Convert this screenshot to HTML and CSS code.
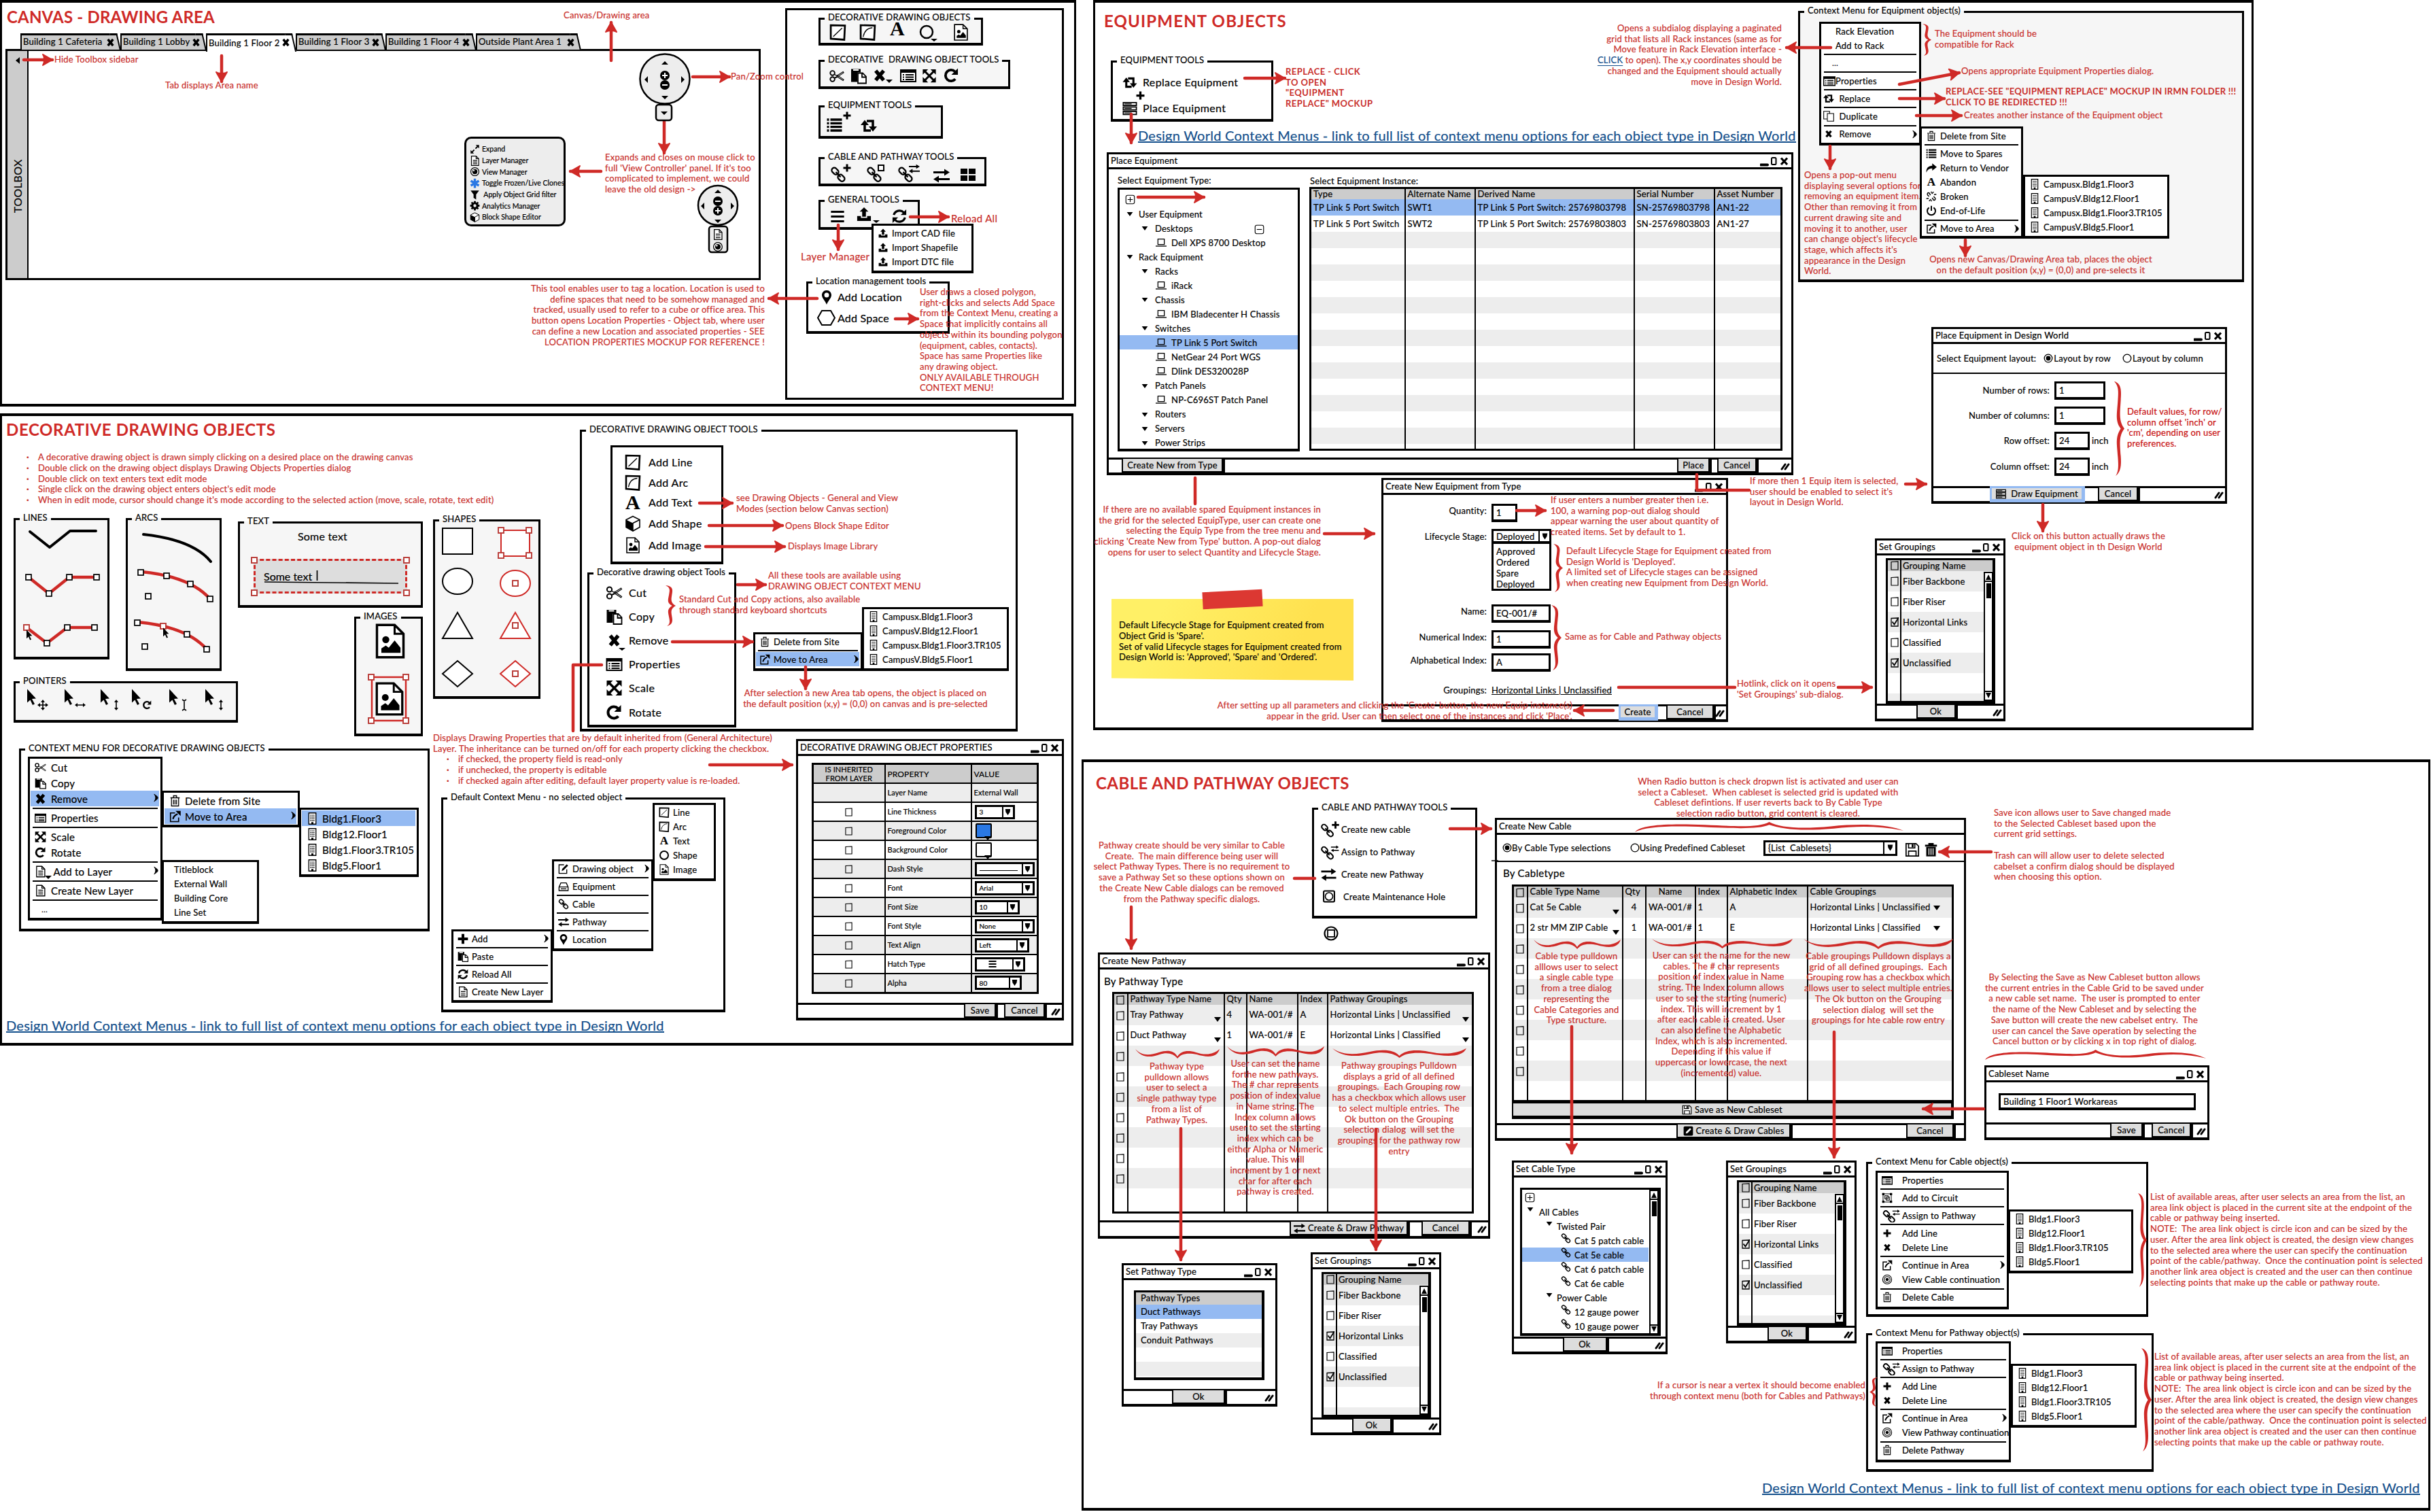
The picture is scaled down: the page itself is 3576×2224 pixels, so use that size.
FILE: index.html
```html
<!DOCTYPE html>
<html lang="en">
<head>
<meta charset="utf-8">
<title>Design World mockup board</title>
<link rel="stylesheet" href="styles.css">
</head>
<body>
<svg class="defs" aria-hidden="true">
<symbol id="x" viewBox="0 0 24 24"><path d="M5 3.500L19 20.500M19 3.500L5 20.500" stroke="#000" stroke-width="6.500"/></symbol>
<symbol id="ctl" viewBox="0 0 42 16"><path d="M1 13.500h10" stroke="#000" stroke-width="4" stroke-linecap="round"/><rect x="17" y="3" width="6.500" height="10" rx="1.500" fill="none" stroke="#000" stroke-width="2"/><path d="M31 3.500l9 9.500M40 3.500l-9 9.500" stroke="#000" stroke-width="3.200"/></symbol>
<symbol id="scissors" viewBox="0 0 24 24"><g fill="none" stroke="#000"><circle cx="5" cy="7" r="3.600" stroke-width="2"/><circle cx="5" cy="17" r="3.600" stroke-width="2"/><path d="M8 9l4 2.500L22 5l1 1.500L12 14 8 15.500M8 15l4-2.500L22 19l1-1.500L12 10" stroke-width="1.200"/></g></symbol>
<symbol id="copy" viewBox="0 0 24 24"><path d="M1 2h14v5h-4l-1 1v13H1z"/><path d="M4 2.500h8v2H4z" fill="#fff"/><path d="M11 8h7l5 5v10H11z" fill="#fff" stroke="#000" stroke-width="1.800"/><path d="M17 8v6h6" fill="none" stroke="#000" stroke-width="1.800"/></symbol>
<symbol id="props" viewBox="0 0 24 24"><path d="M1 4h22v17H1z" fill="#fff" stroke="#000" stroke-width="2"/><path d="M1 4h22v4H1z"/><path d="M4 11h2m2 0h12M4 14.500h2m2 0h12M4 18h2m2 0h12" stroke="#000" stroke-width="1.800"/></symbol>
<symbol id="scale" viewBox="0 0 24 24"><path d="M4 4l16 16M20 4L4 20" stroke="#000" stroke-width="3.500"/><path d="M1 1h9L1 10zM23 1h-9l9 9zM1 23h9l-9-9zM23 23h-9l9-9z"/></symbol>
<symbol id="rotate" viewBox="0 0 24 24"><path d="M18 17.500A8.500 8.500 0 1 1 17.500 6" fill="none" stroke="#000" stroke-width="4"/><path d="M22 1v10H12z"/></symbol>
<symbol id="list" viewBox="0 0 24 24"><path d="M1 4h3m2 0h17M1 9.300h3m2 0h17M1 14.600h3m2 0h17M1 20h3m2 0h17" stroke="#000" stroke-width="3.300"/></symbol>
<symbol id="plus" viewBox="0 0 24 24"><path d="M12 1v22M1 12h22" stroke="#000" stroke-width="6"/></symbol>
<symbol id="replace" viewBox="0 0 24 24"><path d="M6 9v10h9M18 15V5H9" fill="none" stroke="#000" stroke-width="3.500"/><path d="M0 11l6-7.500 6 7.500zM12 13l6 7.500 6-7.500z"/></symbol>
<symbol id="link" viewBox="0 0 24 24"><g fill="none" stroke="#000" stroke-width="2.300"><rect x="2" y="3" width="11" height="7.500" rx="3.700" transform="rotate(45 7.500 6.700)"/><rect x="11" y="13" width="11" height="7.500" rx="3.700" transform="rotate(45 16.500 16.700)"/><path d="M8.500 8l7 7.500"/></g></symbol>
<symbol id="swap" viewBox="0 0 24 24"><path d="M0 7.500h18M6 17.500h18" stroke="#000" stroke-width="3"/><path d="M16 2.500l8 5-8 5zM8 12.500l-8 5 8 5z"/></symbol>
<symbol id="assign" viewBox="0 0 34 24"><use href="#link" width="24" height="24" y="2"/><use href="#swap" x="16" width="17" height="13"/></symbol>
<symbol id="addlink" viewBox="0 0 34 28"><use href="#link" width="24" height="24" y="4"/><use href="#plus" x="19" width="13" height="13"/></symbol>
<symbol id="grid" viewBox="0 0 24 24"><path d="M1 3h10v8H1zM13 3h10v8H13zM1 13h10v8H1zM13 13h10v8H13z"/></symbol>
<symbol id="menu" viewBox="0 0 24 24"><path d="M1 4h22M1 12h22M1 20h22" stroke="#000" stroke-width="3.600"/></symbol>
<symbol id="upload" viewBox="0 0 24 24"><path d="M12 1l7 7h-4v8H9V8H5zM1 15h6v3h10v-3h6v8H1z"/></symbol>
<symbol id="refresh" viewBox="0 0 24 24"><path d="M3 10a9.500 9.500 0 0 1 16-4M21 14a9.500 9.500 0 0 1-16 4" fill="none" stroke="#000" stroke-width="3.500"/><path d="M23 1v9h-9zM1 23v-9h9z"/></symbol>
<symbol id="pin" viewBox="0 0 24 24"><path fill-rule="evenodd" d="M12 0c5 0 8 4 8 8 0 5-5 9-8 16C9 17 4 13 4 8c0-4 3-8 8-8zm0 4a4 4 0 1 0 0 8 4 4 0 0 0 0-8z"/></symbol>
<symbol id="line" viewBox="0 0 24 24"><path d="M2 2l20 .5-1 20L2 21z" fill="#fff" stroke="#000" stroke-width="2.600"/><path d="M5.500 18L18 6" stroke="#000" stroke-width="1.300"/></symbol>
<symbol id="arc" viewBox="0 0 24 24"><path d="M2 2l20 .5-1 20L2 21z" fill="#fff" stroke="#000" stroke-width="2.600"/><path d="M5.500 18.500C7 10 12 6 18.500 5.500" fill="none" stroke="#000" stroke-width="1.300"/></symbol>
<symbol id="ring" viewBox="0 0 24 24"><circle cx="12" cy="12" r="9" fill="none" stroke="#000" stroke-width="3"/></symbol>
<symbol id="image" viewBox="0 0 24 24"><path d="M3 1h12l6 6v16H3z" fill="#fff" stroke="#000" stroke-width="1.600"/><path d="M15 1v6h6" fill="none" stroke="#000" stroke-width="1.400"/><circle cx="9" cy="11" r="2.400"/><path d="M6 20v-3l3-2 2 1.500 4-5 4 5V20z"/></symbol>
<symbol id="cube" viewBox="0 0 24 24"><path d="M12 1.500l10 5v11l-10 5.500-10-5.500v-11z" fill="#fff" stroke="#000" stroke-width="1.600"/><path d="M2 6.500l10 5V23L2 17.500z"/><path d="M12 11.500l10-5M12 11.500V23" stroke="#000" stroke-width="1.500"/></symbol>
<symbol id="doc" viewBox="0 0 24 24"><path d="M4 1h11l6 6v16H4z" fill="#fff" stroke="#000" stroke-width="1.900"/><path d="M15 1v6h6M7.500 11h10M7.500 15h10M7.500 19h10" fill="none" stroke="#000" stroke-width="1.800"/></symbol>
<symbol id="eye" viewBox="0 0 24 24"><circle cx="12" cy="12" r="9.500" fill="#fff" stroke="#000" stroke-width="2"/><circle cx="12" cy="12" r="6"/><circle cx="9.500" cy="9.500" r="1.800" fill="#fff"/></symbol>
<symbol id="snow" viewBox="0 0 24 24"><path d="M12 1v22M2.500 6.500l19 11M21.500 6.500l-19 11" stroke="#2a78e4" stroke-width="5.500"/></symbol>
<symbol id="funnel" viewBox="0 0 24 24"><path d="M2 2h20l-7 9v12l-6-4v-8z"/></symbol>
<symbol id="gear" viewBox="0 0 24 24"><path d="M12 1v22M1 12h22M4.200 4.200l15.600 15.600M19.800 4.200L4.200 19.800" stroke="#000" stroke-width="4.500"/><circle cx="12" cy="12" r="6" fill="#ededed" stroke="#000" stroke-width="5"/></symbol>
<symbol id="expand" viewBox="0 0 24 24"><path d="M5 19L19 5" stroke="#000" stroke-width="3" stroke-dasharray="8 4"/><path d="M22 2v8l-8-8zM2 22v-8l8 8z"/></symbol>
<symbol id="trash" viewBox="0 0 24 24"><path d="M3 6h18M9 5V2h6v3M5 7v15h14V7M9 9.500V19M12 9.500V19M15 9.500V19" fill="none" stroke="#000" stroke-width="1.700"/></symbol>
<symbol id="trashb" viewBox="0 0 24 24"><path d="M2 5h20M9 4V2h6v2" fill="none" stroke="#000" stroke-width="3"/><path d="M4 7h16v16H4z"/><path d="M8.500 9.500v11M12 9.500v11M15.500 9.500v11" stroke="#fff" stroke-width="1.500"/></symbol>
<symbol id="move" viewBox="0 0 24 24"><path d="M12 5H3v17h16v-8" fill="none" stroke="#000" stroke-width="2.200"/><path d="M8 17c1-5 4-8 9-10" fill="none" stroke="#000" stroke-width="3"/><path d="M13 1h10v10z"/></symbol>
<symbol id="bldg" viewBox="0 0 24 24"><path d="M5 1h14v22H5z" fill="#fff" stroke="#000" stroke-width="1.800"/><path d="M8 5.500h8M8 9h8M8 12.500h8M8 16h8" stroke="#000" stroke-width="1.700" stroke-dasharray="2 1"/><path d="M10 19h4v4h-4z"/></symbol>
<symbol id="rack" viewBox="0 0 24 24"><path d="M1 2h22v5H1zM1 9.500h22v5H1zM1 17h22v5H1z" fill="#fff" stroke="#000" stroke-width="2"/><path d="M3 4.500h12M3 12h12M3 19.500h12" stroke="#000" stroke-width="1.500"/></symbol>
<symbol id="laptop" viewBox="0 0 24 24"><path d="M5 4h14v12H5z" fill="none" stroke="#000" stroke-width="1.900"/><path d="M0 19.500h24" stroke="#000" stroke-width="2"/></symbol>
<symbol id="plusbox" viewBox="0 0 24 24"><rect x="2" y="2" width="20" height="20" rx="4" fill="none" stroke="#000" stroke-width="1.800"/><path d="M12 6v12M6 12h12" stroke="#000" stroke-width="1.800"/></symbol>
<symbol id="minusbox" viewBox="0 0 24 24"><rect x="2" y="2" width="20" height="20" rx="4" fill="none" stroke="#000" stroke-width="1.800"/><path d="M6 12h12" stroke="#000" stroke-width="1.800"/></symbol>
<symbol id="dup" viewBox="0 0 24 24"><path d="M1 1h13v17H1z" fill="#fff" stroke="#000" stroke-width="1.600"/><path d="M9 6h14v17H9z" fill="#fff" stroke="#000" stroke-width="1.600"/></symbol>
<symbol id="share" viewBox="0 0 24 24"><path d="M14 2l10 8-10 8v-5C8 13 4 15 1 22 0 12 6 7 14 7z"/></symbol>
<symbol id="broken" viewBox="0 0 24 24"><path d="M10 9L7 4C4 3 2 6 4 9l3 3M14 15l3 5c3 1 5-2 3-5l-3-3M13 6l4-4M18 8l5-1M11 18l-4 4M6 16l-5 1M12 1v3M12 20v3" fill="none" stroke="#000" stroke-width="2.200"/></symbol>
<symbol id="power" viewBox="0 0 24 24"><path d="M7 5a9 9 0 1 0 10 0" fill="none" stroke="#000" stroke-width="3"/><path d="M12 1v11" stroke="#000" stroke-width="3"/></symbol>
<symbol id="save" viewBox="0 0 24 24"><path d="M2 2h16l4 4v16H2z" fill="#fff" stroke="#000" stroke-width="1.900"/><path d="M6 2v7h10V2M6 22v-8h12v8" fill="none" stroke="#000" stroke-width="1.800"/><path d="M11 3h3v5h-3z"/></symbol>
<symbol id="pencil" viewBox="0 0 24 24"><rect x="1" y="1" width="22" height="22" rx="3"/><path d="M6 18l1-4 9-9 3 3-9 9z" fill="#fff"/></symbol>
<symbol id="hole" viewBox="0 0 24 24"><rect x="2" y="2" width="20" height="20" rx="2" fill="#fff" stroke="#000" stroke-width="2.600"/><circle cx="12" cy="12" r="7" fill="none" stroke="#000" stroke-width="2"/></symbol>
<symbol id="circuit" viewBox="0 0 24 24"><path d="M3 3h18v18H3z" fill="none" stroke="#000" stroke-width="1.500"/><path d="M1 1h5v5H1zM18 1h5v5h-5zM1 18h5v5H1zM18 18h5v5h-5z"/><rect x="7" y="7" width="7" height="7" fill="none" stroke="#000" stroke-width="1.500"/><rect x="10" y="10" width="7" height="7" fill="none" stroke="#000" stroke-width="1.500"/></symbol>
<symbol id="target" viewBox="0 0 24 24"><circle cx="12" cy="12" r="10" fill="none" stroke="#000" stroke-width="1.600"/><circle cx="12" cy="12" r="6.500" fill="none" stroke="#000" stroke-width="1.600"/><circle cx="12" cy="12" r="3.500"/></symbol>
<symbol id="drive" viewBox="0 0 24 24"><path d="M2 13l4-9h12l4 9v8H2zM2 13h20M6 17h12" fill="none" stroke="#000" stroke-width="2"/></symbol>
<symbol id="edit" viewBox="0 0 24 24"><path d="M13 3H2v19h17v-9" fill="none" stroke="#000" stroke-width="2"/><path d="M8 17l1-5L19 2l3 3-10 10z"/></symbol>
<symbol id="chev" viewBox="0 0 10 14"><path d="M2 1c4 3 6 4 6 6s-2 3-6 6c3-4 3-8 0-12z" stroke="#000" stroke-width="1"/></symbol>
<symbol id="down" viewBox="0 0 10 8"><path d="M0 1h10L5 8z"/></symbol>
<symbol id="pull" viewBox="0 0 12 14"><path d="M1 1h10l-1 6-4 6-4-6z"/></symbol>
<symbol id="box" viewBox="0 0 12 14"><path d="M1 1.500l10-.5v12H1z" fill="none" stroke="#000" stroke-width="1.200"/></symbol>
<symbol id="boxv" viewBox="0 0 12 14"><path d="M1 1.500l10-.5v12H1z" fill="none" stroke="#000" stroke-width="1.300"/><path d="M2.500 6.500l3 4L12 0" fill="none" stroke="#000" stroke-width="1.800"/></symbol>
<symbol id="grip" viewBox="0 0 14 12"><path d="M2 10l5-7M7 10l5-7" stroke="#000" stroke-width="3" stroke-linecap="round"/></symbol>
<symbol id="ron" viewBox="0 0 14 14"><circle cx="7" cy="7" r="5.800" fill="#fff" stroke="#000" stroke-width="1.300"/><circle cx="7" cy="7" r="3.400"/></symbol>
<symbol id="roff" viewBox="0 0 14 14"><circle cx="7" cy="7" r="5.800" fill="#fff" stroke="#000" stroke-width="1.300"/></symbol>
<symbol id="cursor" viewBox="0 0 14 24"><path d="M0 0l13 14-6 .5L11 22l-3 1.500L4.500 16 0 20z"/></symbol>
<symbol id="h" viewBox="0 0 10 10"><rect x="1" y="1" width="8" height="8" fill="#fff" stroke="#000" stroke-width="1.700"/></symbol>
<symbol id="hr" viewBox="0 0 10 10"><rect x="1" y="1" width="8" height="8" fill="#fff" stroke="#b83a36" stroke-width="1.900"/></symbol>
<symbol id="br" viewBox="0 0 14 100" preserveAspectRatio="none"><path d="M0 0C10 2 10 10 9 20 8 33 6 42 14 50 6 58 8 66 9 79 10 89 9 96 2 100 6 95 6 90 5 80 4 67 1 59 9 50 1 42 4 34 5 20 6 10 6 5 0 0z" fill="#cf2a27"/></symbol>
<symbol id="bd" viewBox="0 0 100 14" preserveAspectRatio="none"><path d="M0 0C8 11 18 9 28 5 38 1 46 2 50 11 54 3 62 1 72 5 82 9 92 9 100 0 97 14 84 12 73 8 62 5 54 7 50 14 46 7 38 4 29 8 18 13 7 13 0 0z" fill="#cf2a27"/></symbol>
<symbol id="bu" viewBox="0 0 100 14" preserveAspectRatio="none"><path d="M0 14C2 3 14 2 26 4 38 6 46 8 50 0 54 8 62 10 73 6 84 2 94 3 100 12 92 6 84 5 74 9 62 13 55 10 50 4 46 10 38 9 26 7 14 5 4 6 0 14z" fill="#cf2a27"/></symbol>
<symbol id="bl" viewBox="0 0 14 100" preserveAspectRatio="none"><path d="M14 0C4 2 4 10 5 20 6 33 8 42 0 50 8 58 6 66 5 79 4 89 5 96 12 100 8 95 8 90 9 80 10 67 13 59 5 50 13 42 10 34 9 20 8 10 8 5 14 0z" fill="#cf2a27"/></symbol>
<marker id="head" viewBox="-17 -10 19 20" refX="0" refY="0" markerWidth="19" markerHeight="20" markerUnits="userSpaceOnUse" orient="auto"><path d="M0 0L-14-8Q-11-3-13 0-11 3-14 8z" fill="#cf2a27" stroke="#cf2a27" stroke-width="2" stroke-linejoin="round"/></marker>
</svg>

<main class="board">
<div class="col left">

<section class="panel canvas-area">
<h1 class="t1">CANVAS - DRAWING AREA</h1>
<div class="viewport"><aside><svg class="hide" viewBox="0 0 6 10"><path d="M6 0v10L0 5z"/></svg><span>TOOLBOX</span></aside></div>
<nav class="tabs">
<div class="tab a">Building 1 Cafeteria<svg><use href="#x"/></svg></div>
<div class="tab b">Building 1 Lobby<svg><use href="#x"/></svg></div>
<div class="tab c on">Building 1 Floor 2<svg><use href="#x"/></svg></div>
<div class="tab c">Building 1 Floor 3<svg><use href="#x"/></svg></div>
<div class="tab d">Building 1 Floor 4<svg><use href="#x"/></svg></div>
<div class="tab e">Outside Plant Area 1<svg><use href="#x"/></svg></div>
</nav>
<ul class="viewctl">
<li><svg><use href="#expand"/></svg>Expand<li><svg><use href="#doc"/></svg>Layer Manager<li><svg><use href="#eye"/></svg>View Manager<li><svg><use href="#snow"/></svg>Toggle Frozen/Live Clones<li><svg><use href="#funnel"/></svg>&nbsp;Apply Object Grid filter<li><svg><use href="#gear"/></svg>Analytics Manager<li><svg><use href="#cube"/></svg>Block Shape Editor
</ul>
<div class="toolbox"></div>
<fieldset class="f-ddo g"><legend>DECORATIVE DRAWING OBJECTS</legend></fieldset>
<fieldset class="f-ddot g"><legend>DECORATIVE&nbsp; DRAWING OBJECT TOOLS</legend></fieldset>
<fieldset class="f-eq g"><legend>EQUIPMENT TOOLS</legend></fieldset>
<fieldset class="f-cp g"><legend>CABLE AND PATHWAY TOOLS</legend></fieldset>
<fieldset class="f-gen g"><legend>GENERAL TOOLS</legend></fieldset>
<ul class="menu m-import"><li><svg><use href="#upload"/></svg>Import CAD file<li><svg><use href="#upload"/></svg>Import Shapefile<li><svg><use href="#upload"/></svg>Import DTC file</ul>
<fieldset class="f-loc"><legend>Location management tools</legend><div>Add Location</div><div>Add Space</div></fieldset>
</section>

<section class="panel decorative">
<h1 class="t2">DECORATIVE DRAWING OBJECTS</h1>
<ul class="rules"><li>A decorative drawing object is drawn simply clicking on a desired place on the drawing canvas<li>Double click on the drawing object displays Drawing Objects Properties dialog<li>Double click on text enters text edit mode<li>Single click on the drawing object enters object's edit mode<li>When in edit mode, cursor should change it's mode according to the selected action (move, scale, rotate, text edit)</ul>
<fieldset class="f-lines g"><legend>LINES</legend></fieldset>
<fieldset class="f-arcs g"><legend>ARCS</legend></fieldset>
<fieldset class="f-text g"><legend>TEXT</legend><p>Some text</p><div class="sel"><span>Some text</span></div></fieldset>
<fieldset class="f-shapes g"><legend>SHAPES</legend></fieldset>
<fieldset class="f-images g"><legend>IMAGES</legend></fieldset>
<fieldset class="f-pointers g"><legend>POINTERS</legend></fieldset>
<fieldset class="f-tools"><legend>DECORATIVE DRAWING OBJECT TOOLS</legend></fieldset>
<ul class="list l-add"><li><svg><use href="#line"/></svg>Add Line<li><svg><use href="#arc"/></svg>Add Arc<li><b class="A">A</b>Add Text<li><svg><use href="#cube"/></svg>Add Shape<li><svg><use href="#image"/></svg>Add Image</ul>
<fieldset class="f-dtools"><legend>Decorative drawing object Tools</legend>
<ul><li><svg><use href="#scissors"/></svg>Cut<li><svg><use href="#copy"/></svg>Copy<li><svg><use href="#x"/></svg>Remove<li><svg><use href="#props"/></svg>Properties<li><svg><use href="#scale"/></svg>Scale<li><svg><use href="#rotate"/></svg>Rotate</ul></fieldset>
<ul class="menu m-rm"><li><svg><use href="#trash"/></svg>Delete from Site<li class="sep"><li class="on"><svg><use href="#move"/></svg>Move to Area<svg class="ch"><use href="#chev"/></svg></ul>
<ul class="menu m-campus1"><li><svg><use href="#bldg"/></svg>Campusx.Bldg1.Floor3<li><svg><use href="#bldg"/></svg>CampusV.Bldg12.Floor1<li><svg><use href="#bldg"/></svg>Campusx.Bldg1.Floor3.TR105<li><svg><use href="#bldg"/></svg>CampusV.Bldg5.Floor1</ul>

<fieldset class="f-ctx"><legend>CONTEXT MENU FOR DECORATIVE DRAWING OBJECTS</legend></fieldset>
<ul class="menu big m-ctx"><li><svg><use href="#scissors"/></svg>Cut<li><svg><use href="#copy"/></svg>Copy<li class="on"><svg><use href="#x"/></svg>Remove<svg class="ch"><use href="#chev"/></svg><li class="sep"><li><svg><use href="#props"/></svg>Properties<li class="sep"><li><svg><use href="#scale"/></svg>Scale<li><svg><use href="#rotate"/></svg>Rotate<li class="sep"><li><svg><use href="#doc"/></svg>&nbsp;Add to Layer<svg class="ch"><use href="#chev"/></svg><li class="sep"><li><svg><use href="#doc"/></svg>Create New Layer<li class="sep"><li class="dots">...</ul>
<ul class="menu m-layers plain"><li>Titleblock<li>External Wall<li>Building Core<li>Line Set</ul>
<ul class="menu big m-ctx2"><li><svg><use href="#trash"/></svg>Delete from Site<li class="on"><svg><use href="#move"/></svg>Move to Area<svg class="ch"><use href="#chev"/></svg></ul>
<ul class="menu big m-ctx3"><li class="on"><svg><use href="#bldg"/></svg>Bldg1.Floor3<li><svg><use href="#bldg"/></svg>Bldg12.Floor1<li><svg><use href="#bldg"/></svg>Bldg1.Floor3.TR105<li><svg><use href="#bldg"/></svg>Bldg5.Floor1</ul>

<fieldset class="f-def"><legend>Default Context Menu - no selected object</legend></fieldset>
<ul class="menu m-def1"><li><svg><use href="#plus"/></svg>Add<svg class="ch"><use href="#chev"/></svg><li class="sep"><li><svg><use href="#copy"/></svg>Paste<li class="sep"><li><svg><use href="#refresh"/></svg>Reload All<li class="sep"><li><svg><use href="#doc"/></svg>Create New Layer</ul>
<ul class="menu m-def2"><li><svg><use href="#edit"/></svg>Drawing object<svg class="ch"><use href="#chev"/></svg><li class="sep"><li><svg><use href="#drive"/></svg>Equipment<li class="sep"><li><svg><use href="#link"/></svg>Cable<li class="sep"><li><svg><use href="#swap"/></svg>Pathway<li class="sep"><li><svg><use href="#pin"/></svg>Location</ul>
<ul class="menu m-def3"><li><svg><use href="#line"/></svg>Line<li><svg><use href="#arc"/></svg>Arc<li><b class="A">A</b>Text<li><svg><use href="#ring"/></svg>Shape<li><svg><use href="#image"/></svg>Image</ul>

<article class="win w-props"><header>DECORATIVE DRAWING OBJECT PROPERTIES<svg><use href="#ctl"/></svg></header>
<div class="body"><table><colgroup><col class="c1"><col class="c2"><col></colgroup>
<tr><th>IS INHERITED<br>FROM LAYER<th>PROPERTY<th>VALUE
<tr><td><td>Layer Name<td>External Wall
<tr><td><svg><use href="#box"/></svg><td>Line Thickness<td><span class="combo w59">3<i><svg><use href="#pull"/></svg></i></span>
<tr><td><svg><use href="#box"/></svg><td>Foreground Color<td><span class="swatch blue"></span>
<tr><td><svg><use href="#box"/></svg><td>Background Color<td><span class="swatch"></span>
<tr><td><svg><use href="#box"/></svg><td>Dash Style<td><span class="combo w88"><u class="dash"></u><i><svg><use href="#pull"/></svg></i></span>
<tr><td><svg><use href="#box"/></svg><td>Font<td><span class="combo w88">Arial<i><svg><use href="#pull"/></svg></i></span>
<tr><td><svg><use href="#box"/></svg><td>Font Size<td><span class="combo w66">10<i><svg><use href="#pull"/></svg></i></span>
<tr><td><svg><use href="#box"/></svg><td>Font Style<td><span class="combo w88">None<i><svg><use href="#pull"/></svg></i></span>
<tr><td><svg><use href="#box"/></svg><td>Text Align<td><span class="combo w80">Left<i><svg><use href="#pull"/></svg></i></span>
<tr><td><svg><use href="#box"/></svg><td>Hatch Type<td><span class="combo w74"><svg class="hatch"><use href="#menu"/></svg><i><svg><use href="#pull"/></svg></i></span>
<tr><td><svg><use href="#box"/></svg><td>Alpha<td><span class="combo w69">80<i><svg><use href="#pull"/></svg></i></span>
</table></div>
<footer><button>Save</button><button>Cancel</button><svg><use href="#grip"/></svg></footer></article>
<a class="link k1">Design World Context Menus - link to full list of context menu options for each object type in Design World</a>
</section>
</div>

<div class="col right">
<section class="panel equipment">
<h1 class="t3">EQUIPMENT OBJECTS</h1>
<fieldset class="f-eqt"><legend>EQUIPMENT TOOLS</legend><ul><li><svg><use href="#replace"/></svg>Replace Equipment<li><svg><use href="#rack"/></svg>Place Equipment</ul></fieldset>
<a class="link k2">Design World Context Menus - link to full list of context menu options for each object type in Design World</a>

<article class="win w-place"><header>Place Equipment<svg><use href="#ctl"/></svg></header>
<div class="body">
<div class="pane"><h2>Select Equipment Type:</h2>
<ul class="tree"><li class="add"><svg><use href="#plusbox"/></svg>
<li><svg class="dn"><use href="#down"/></svg>User Equipment
<li class="l2"><svg class="dn"><use href="#down"/></svg>Desktops<svg class="minus"><use href="#minusbox"/></svg>
<li class="l3"><svg><use href="#laptop"/></svg>Dell XPS 8700 Desktop
<li><svg class="dn"><use href="#down"/></svg>Rack Equipment
<li class="l2"><svg class="dn"><use href="#down"/></svg>Racks
<li class="l3"><svg><use href="#laptop"/></svg>iRack
<li class="l2"><svg class="dn"><use href="#down"/></svg>Chassis
<li class="l3"><svg><use href="#laptop"/></svg>IBM Bladecenter H Chassis
<li class="l2"><svg class="dn"><use href="#down"/></svg>Switches
<li class="l3 on"><svg><use href="#laptop"/></svg>TP Link 5 Port Switch
<li class="l3"><svg><use href="#laptop"/></svg>NetGear 24 Port WGS
<li class="l3"><svg><use href="#laptop"/></svg>Dlink DES320028P
<li class="l2"><svg class="dn"><use href="#down"/></svg>Patch Panels
<li class="l3"><svg><use href="#laptop"/></svg>NP-C696ST Patch Panel
<li class="l2"><svg class="dn"><use href="#down"/></svg>Routers
<li class="l2"><svg class="dn"><use href="#down"/></svg>Servers
<li class="l2"><svg class="dn"><use href="#down"/></svg>Power Strips
</ul></div>
<div class="pane inst"><h2>Select Equipment Instance:</h2>
<table class="rows"><colgroup><col class="p1"><col class="p2"><col class="p3"><col class="p4"><col></colgroup>
<tr><th>Type<th>Alternate Name<th>Derived Name<th>Serial Number<th>Asset Number
<tr class="on"><td>TP Link 5 Port Switch<td>SWT1<td>TP Link 5 Port Switch: 25769803798<td>SN-25769803798<td>AN1-22
<tr><td>TP Link 5 Port Switch<td>SWT2<td>TP Link 5 Port Switch: 25769803803<td>SN-25769803803<td>AN1-27
<tr><td><td><td><td><td><tr><td><td><td><td><td><tr><td><td><td><td><td><tr><td><td><td><td><td><tr><td><td><td><td><td><tr><td><td><td><td><td><tr><td><td><td><td><td><tr><td><td><td><td><td><tr><td><td><td><td><td><tr><td><td><td><td><td><tr><td><td><td><td><td><tr><td><td><td><td><td><tr><td><td><td><td><td><tr class="last"><td><td><td><td><td>
</table></div></div>
<footer><button class="first">Create New from Type</button><button>Place</button><button>Cancel</button><svg><use href="#grip"/></svg></footer></article>

<fieldset class="f-eqctx g"><legend>Context Menu for Equipment object(s)</legend></fieldset>
<ul class="menu m-eq1"><li class="ni">Rack Elevation<li class="ni">Add to Rack<li class="sep"><li class="dots">...<li class="sep"><li><svg class="lg"><use href="#props"/></svg>Properties<li class="sep"><li><svg><use href="#replace"/></svg>&nbsp;Replace<li class="sep"><li><svg><use href="#dup"/></svg>&nbsp;Duplicate<li class="sep"><li><svg class="sm"><use href="#x"/></svg>&nbsp;Remove<svg class="ch"><use href="#chev"/></svg></ul>
<p class="note n-popout">Opens a pop-out menu
displaying several options for
removing an equipment item.
Other than removing it from
current drawing site and
moving it to another, user
can change object's lifecycle
stage, which affects it's
appearance in the Design
World.</p>
<ul class="menu m-eq2"><li><svg><use href="#trash"/></svg>Delete from Site<li class="sep"><li><svg><use href="#list"/></svg>Move to Spares<li><svg><use href="#share"/></svg>Return to Vendor<li><b class="A">A</b>Abandon<li><svg><use href="#broken"/></svg>Broken<li><svg><use href="#power"/></svg>End-of-Life<li class="sep"><li><svg><use href="#move"/></svg>Move to Area<svg class="ch"><use href="#chev"/></svg></ul>
<ul class="menu m-eq3"><li><svg><use href="#bldg"/></svg>Campusx.Bldg1.Floor3<li><svg><use href="#bldg"/></svg>CampusV.Bldg12.Floor1<li><svg><use href="#bldg"/></svg>Campusx.Bldg1.Floor3.TR105<li><svg><use href="#bldg"/></svg>CampusV.Bldg5.Floor1</ul>

<article class="win w-new"><header>Create New Equipment from Type<svg><use href="#ctl"/></svg></header>
<div class="body form">
<label>Quantity:</label><span class="field q">1</span>
<label>Lifecycle Stage:</label><div class="stage"><span class="combo">Deployed<i><svg><use href="#pull"/></svg></i></span><ul><li>Approved<li>Ordered<li>Spare<li>Deployed</ul></div>
<label>Name:</label><span class="field">EQ-001/#</span>
<label>Numerical Index:</label><span class="field">1</span>
<label>Alphabetical Index:</label><span class="field">A</span>
<label>Groupings:</label><u>Horizontal Links | Unclassified</u>
</div>
<footer><button class="glow">Create</button><button>Cancel</button><svg><use href="#grip"/></svg></footer></article>

<article class="win w-design"><header>Place Equipment in Design World<svg><use href="#ctl"/></svg></header>
<div class="radios">Select Equipment layout:<svg class="r1"><use href="#ron"/></svg>Layout by row<svg class="r2"><use href="#roff"/></svg>Layout by column</div>
<div class="body form"><label>Number of rows:</label><span class="field">1</span><label>Number of columns:</label><span class="field">1</span><label>Row offset:</label><span><span class="field s">24</span>inch</span><label>Column offset:</label><span><span class="field s">24</span>inch</span></div>
<footer><button class="glow"><svg><use href="#rack"/></svg>Draw Equipment</button><button>Cancel</button><svg><use href="#grip"/></svg></footer></article>

<article class="win w-group g1"><header>Set Groupings<svg><use href="#ctl"/></svg></header>
<div class="body"><ul><li class="hd"><svg><use href="#box"/></svg>Grouping Name<li><svg><use href="#box"/></svg>Fiber Backbone<li><svg><use href="#box"/></svg>Fiber Riser<li><svg><use href="#boxv"/></svg>Horizontal Links<li><svg><use href="#box"/></svg>Classified<li><svg><use href="#boxv"/></svg>Unclassified<li><li></ul><div class="scroll"></div></div>
<footer><button>Ok</button><svg><use href="#grip"/></svg></footer></article>

<div class="sticky"><p>Default Lifecycle Stage for Equipment created from
Object Grid is 'Spare'.
Set of valid Lifecycle stages for Equipment created from
Design World is: 'Approved', 'Spare' and 'Ordered'.</p><i></i></div>
</section>

<section class="panel cable">
<h1 class="t4">CABLE AND PATHWAY OBJECTS</h1>
<fieldset class="f-cpt"><legend>CABLE AND PATHWAY TOOLS</legend><ul><li><svg><use href="#addlink"/></svg>Create new cable<li><svg><use href="#assign"/></svg>Assign to Pathway<li><svg><use href="#swap"/></svg>Create new Pathway<li><svg><use href="#hole"/></svg>Create Maintenance Hole</ul></fieldset>

<article class="win w-path"><header>Create New Pathway<svg><use href="#ctl"/></svg></header>
<div class="body"><h3>By Pathway Type</h3>
<table class="rows tall"><colgroup><col class="k"><col class="a1"><col class="a2"><col class="a3"><col class="a4"><col></colgroup>
<tr><th><svg><use href="#box"/></svg><th>Pathway Type Name<th>Qty<th>Name<th>Index<th>Pathway Groupings
<tr><td><svg><use href="#box"/></svg><td>Tray Pathway<svg class="dn"><use href="#down"/></svg><td>4<td>WA-001/#<td>A<td>Horizontal Links | Unclassified<svg class="dn"><use href="#down"/></svg>
<tr><td><svg><use href="#box"/></svg><td>Duct Pathway<svg class="dn"><use href="#down"/></svg><td>1<td>WA-001/#<td>E<td>Horizontal Links | Classified<svg class="dn"><use href="#down"/></svg>
<tr><td><svg><use href="#box"/></svg><td><td><td><td><td><tr><td><svg><use href="#box"/></svg><td><td><td><td><td><tr><td><svg><use href="#box"/></svg><td><td><td><td><td><tr><td><svg><use href="#box"/></svg><td><td><td><td><td><tr><td><svg><use href="#box"/></svg><td><td><td><td><td><tr><td><svg><use href="#box"/></svg><td><td><td><td><td><tr><td><svg><use href="#box"/></svg><td><td><td><td><td><tr><td><td><td><td><td><td><tr class="last"><td><td><td><td><td><td>
</table></div>
<footer><button><svg><use href="#swap"/></svg>Create &amp; Draw Pathway</button><button>Cancel</button><svg><use href="#grip"/></svg></footer></article>

<article class="win w-cable"><header>Create New Cable</header>
<div class="radios"><svg class="r1"><use href="#ron"/></svg>By Cable Type selections<svg class="r2"><use href="#roff"/></svg>Using Predefined Cableset<span class="combo">{List&nbsp; Cablesets}<i><svg><use href="#pull"/></svg></i></span><svg class="sv"><use href="#save"/></svg><svg class="tr"><use href="#trashb"/></svg></div>
<div class="body"><h3>By Cabletype</h3>
<table class="rows tall"><colgroup><col class="k"><col class="b1"><col class="b2"><col class="b3"><col class="b4"><col class="b5"><col></colgroup>
<tr><th><svg><use href="#box"/></svg><th>Cable Type Name<th>Qty<th class="ce">Name<th>Index<th>Alphabetic Index<th>Cable Groupings
<tr><td><svg><use href="#box"/></svg><td>Cat 5e Cable<svg class="dn"><use href="#down"/></svg><td class="ce">4<td class="ce">WA-001/#<td>1<td>A<td>Horizontal Links | Unclassified<svg class="dn m"><use href="#down"/></svg>
<tr><td><svg><use href="#box"/></svg><td>2 str MM ZIP Cable<svg class="dn"><use href="#down"/></svg><td class="ce">1<td class="ce">WA-001/#<td>1<td>E<td>Horizontal Links | Classified<svg class="dn m"><use href="#down"/></svg>
<tr><td><svg><use href="#box"/></svg><td><td><td><td><td><td><tr><td><svg><use href="#box"/></svg><td><td><td><td><td><td><tr><td><svg><use href="#box"/></svg><td><td><td><td><td><td><tr><td><svg><use href="#box"/></svg><td><td><td><td><td><td><tr><td><svg><use href="#box"/></svg><td><td><td><td><td><td><tr><td><svg><use href="#box"/></svg><td><td><td><td><td><td><tr><td><svg><use href="#box"/></svg><td><td><td><td><td><td><tr><td><td><td><td><td><td><td>
</table><button class="savenew"><svg><use href="#save"/></svg>Save as New Cableset</button></div>
<footer><button><svg><use href="#pencil"/></svg>Create &amp; Draw Cables</button><button>Cancel</button></footer></article>

<article class="win w-csname"><header>Cableset Name<svg><use href="#ctl"/></svg></header><div class="body"><span class="field">Building 1 Floor1 Workareas</span></div><footer><button>Save</button><button>Cancel</button><svg><use href="#grip"/></svg></footer></article>

<article class="win w-ptype"><header>Set Pathway Type<svg><use href="#ctl"/></svg></header><div class="body"><ul><li class="hd">Pathway Types<li class="on">Duct Pathways<li>Tray Pathways<li>Conduit Pathways<li><li></ul></div><footer><button>Ok</button><svg><use href="#grip"/></svg></footer></article>

<article class="win w-group g2"><header>Set Groupings<svg><use href="#ctl"/></svg></header>
<div class="body"><ul><li class="hd"><svg><use href="#box"/></svg>Grouping Name<li><svg><use href="#box"/></svg>Fiber Backbone<li><svg><use href="#box"/></svg>Fiber Riser<li><svg><use href="#boxv"/></svg>Horizontal Links<li><svg><use href="#box"/></svg>Classified<li><svg><use href="#boxv"/></svg>Unclassified<li><li></ul><div class="scroll"></div></div>
<footer><button>Ok</button><svg><use href="#grip"/></svg></footer></article>

<article class="win w-ctype"><header>Set Cable Type<svg><use href="#ctl"/></svg></header>
<div class="body"><ul class="tree"><li class="add"><svg><use href="#plusbox"/></svg><li><svg class="dn"><use href="#down"/></svg>All Cables<li class="l2"><svg class="dn"><use href="#down"/></svg>Twisted Pair<li class="l3"><svg><use href="#link"/></svg>Cat 5 patch cable<li class="l3 on"><svg><use href="#link"/></svg>Cat 5e cable<li class="l3"><svg><use href="#link"/></svg>Cat 6 patch cable<li class="l3"><svg><use href="#link"/></svg>Cat 6e cable<li class="l2"><svg class="dn"><use href="#down"/></svg>Power Cable<li class="l3"><svg><use href="#link"/></svg>12 gauge power<li class="l3"><svg><use href="#link"/></svg>10 gauge power</ul><div class="scroll"></div></div>
<footer><button>Ok</button><svg><use href="#grip"/></svg></footer></article>

<article class="win w-group g3"><header>Set Groupings<svg><use href="#ctl"/></svg></header>
<div class="body"><ul><li class="hd"><svg><use href="#box"/></svg>Grouping Name<li><svg><use href="#box"/></svg>Fiber Backbone<li><svg><use href="#box"/></svg>Fiber Riser<li><svg><use href="#boxv"/></svg>Horizontal Links<li><svg><use href="#box"/></svg>Classified<li><svg><use href="#boxv"/></svg>Unclassified<li><li></ul><div class="scroll"></div></div>
<footer><button>Ok</button><svg><use href="#grip"/></svg></footer></article>

<fieldset class="f-cctx"><legend>Context Menu for Cable object(s)</legend></fieldset>
<ul class="menu wide m-c1"><li><svg><use href="#props"/></svg>Properties<li class="sep"><li><svg><use href="#circuit"/></svg>Add to Circuit<li class="sep"><li><svg class="as"><use href="#assign"/></svg>Assign to Pathway<li class="sep"><li><svg class="sm"><use href="#plus"/></svg>Add Line<li><svg class="sm"><use href="#x"/></svg>Delete Line<li class="sep"><li><svg><use href="#move"/></svg>Continue in Area<svg class="ch"><use href="#chev"/></svg><li><svg><use href="#target"/></svg>View Cable continuation<li class="sep"><li><svg><use href="#trash"/></svg>Delete Cable</ul>
<ul class="menu m-c2"><li><svg><use href="#bldg"/></svg>Bldg1.Floor3<li><svg><use href="#bldg"/></svg>Bldg12.Floor1<li><svg><use href="#bldg"/></svg>Bldg1.Floor3.TR105<li><svg><use href="#bldg"/></svg>Bldg5.Floor1</ul>
<fieldset class="f-pctx"><legend>Context Menu for Pathway object(s)</legend></fieldset>
<ul class="menu wide m-p1"><li><svg><use href="#props"/></svg>Properties<li class="sep"><li><svg class="as"><use href="#assign"/></svg>Assign to Pathway<li class="sep"><li><svg class="sm"><use href="#plus"/></svg>Add Line<li><svg class="sm"><use href="#x"/></svg>Delete Line<li class="sep"><li><svg><use href="#move"/></svg>Continue in Area<svg class="ch"><use href="#chev"/></svg><li><svg><use href="#target"/></svg>View Pathway continuation<li class="sep"><li><svg><use href="#trash"/></svg>Delete Pathway</ul>
<ul class="menu m-p2"><li><svg><use href="#bldg"/></svg>Bldg1.Floor3<li><svg><use href="#bldg"/></svg>Bldg12.Floor1<li><svg><use href="#bldg"/></svg>Bldg1.Floor3.TR105<li><svg><use href="#bldg"/></svg>Bldg5.Floor1</ul>
<a class="link k3">Design World Context Menus - link to full list of context menu options for each object type in Design World</a>
</section>
</div>

<!-- annotations -->
<p class="note n-hide">Hide Toolbox sidebar</p>
<p class="note n-tab">Tab displays Area name</p>
<p class="note n-canvas">Canvas/Drawing area</p>
<p class="note n-pan">Pan/Zoom control</p>
<p class="note n-expands">Expands and closes on mouse click to
full 'View Controller' panel. If it's too
complicated to implement, we could
leave the old design -&gt;</p>
<p class="note ra n-tag">This tool enables user to tag a location. Location is used to
define spaces that need to be somehow managed and
tracked, usually used to refer to a cube or office area. This
button opens Location Properties - Object tab, where user
can define a new Location and associated properties - SEE
LOCATION PROPERTIES MOCKUP FOR REFERENCE !</p>
<p class="note lg n-reload">Reload All</p>
<p class="note lg n-layer">Layer Manager</p>
<p class="note n-space">User draws a closed polygon,
right-clicks and selects Add Space
from the Context Menu, creating a
Space that implicitly contains all
objects within its bounding polygon
(equipment, cables, contacts).
Space has same Properties like
any drawing object.
ONLY AVAILABLE THROUGH
CONTEXT MENU!</p>
<p class="note n-see">see Drawing Objects - General and View
Modes (section below Canvas section)</p>
<p class="note n-block">Opens Block Shape Editor</p>
<p class="note n-imglib">Displays Image Library</p>
<p class="note n-all">All these tools are available using
DRAWING OBJECT CONTEXT MENU</p>
<p class="note n-cut">Standard Cut and Copy actions, also available
through standard keyboard shortcuts</p>
<p class="note ce n-after">After selection a new Area tab opens, the object is placed on
the default position (x,y) = (0,0) on canvas and is pre-selected</p>
<div class="note n-inherit">Displays Drawing Properties that are by default inherited from (General Architecture)
Layer. The inheritance can be turned on/off for each property clicking the checkbox.<ul><li>if checked, the property field is read-only</li><li>if unchecked, the property is editable</li><li>if checked again after editing, default layer property value is re-loaded.</li></ul></div>
<p class="note bold n-repl">REPLACE - CLICK
TO OPEN
"EQUIPMENT
REPLACE" MOCKUP</p>
<p class="note ra n-sub">Opens a subdialog displaying a paginated
grid that lists all Rack instances (same as for
Move feature in Rack Elevation interface -
<a>CLICK</a> to open). The x,y coordinates should be
changed and the Equipment should actually
move in Design World.</p>
<p class="note n-compat">The Equipment should be
compatible for Rack</p>
<p class="note n-dialog">Opens appropriate Equipment Properties dialog.</p>
<p class="note bold n-irmn">REPLACE-SEE "EQUIPMENT REPLACE" MOCKUP IN IRMN FOLDER !!!
CLICK TO BE REDIRECTED !!!</p>
<p class="note n-creates">Creates another instance of the Equipment object</p>
<p class="note ce n-newtab">Opens new Canvas/Drawing Area tab, places the object
on the default position (x,y) = (0,0) and pre-selects it</p>
<p class="note ra n-spared">If there are no available spared Equipment instances in
the grid for the selected EquipType, user can create one
selecting the Equip Type from the tree menu and
clicking 'Create New from Type' button. A pop-out dialog
opens for user to select Quantity and Lifecycle Stage.</p>
<p class="note n-warn">If user enters a number greater then i.e.
100, a warning pop-out dialog should
appear warning the user about quantity of
created items. Set by default to 1.</p>
<p class="note n-deflife">Default Lifecycle Stage for Equipment created from
Design World is 'Deployed'.
A limited set of Lifecycle stages can be assigned
when creating new Equipment from Design World.</p>
<p class="note n-same">Same as for Cable and Pathway objects</p>
<p class="note n-hot">Hotlink, click on it opens
'Set Groupings' sub-dialog.</p>
<p class="note ra n-setting">After setting up all parameters and clicking the 'Create' button, the new Equip instance(s)
appear in the grid. User can then select one of the instances and click 'Place'.</p>
<p class="note n-more">If more then 1 Equip item is selected,
user should be enabled to select it's
layout in Design World.</p>
<p class="note n-defval">Default values, for row/
column offset 'inch' or
'cm', depending on user
preferences.</p>
<p class="note ce n-draws">Click on this button actually draws the
equipment object in th Design World</p>
<p class="note ce n-pcreate">Pathway create should be very similar to Cable
Create.  The main difference being user will
select Pathway Types. There is no requirement to
save a Pathway Set so these options shown on
the Create New Cable dialogs can be removed
from the Pathway specific dialogs.</p>
<p class="note ce n-ptype">Pathway type
pulldown allows
user to select a
single pathway type
from a list of
Pathway Types.</p>
<p class="note ce n-pname">User can set the name
forthe new pathways.
The # char represents
position of index value
in Name string. The
Index column allows
user to set the starting
index which can be
either Alpha or Numeric
value. This will
increment by 1 or next
char for after each
pathway is created.</p>
<p class="note ce n-pgroup">Pathway groupings Pulldown
displays a grid of all defined
groupings.  Each Grouping row
has a checkbox which allows user
to select multiple entries.  The
Ok button on the Grouping
selection dialog  will set the
groupings for the pathway row
entry</p>
<p class="note ce n-radio">When Radio button is check dropwn list is activated and user can
select a Cableset.  When cableset is selected grid is updated with
Cableset defintions. If user reverts back to By Cable Type
selection radio button, grid content is cleared.</p>
<p class="note n-saveicon">Save icon allows user to Save changed made
to the Selected Cableset based upon the
current grid settings.

Trash can will allow user to delete selected
cabelset a confirm dialog should be displayed
when choosing this option.</p>
<p class="note ce n-ctype">Cable type pulldown
alllows user to select
a single cable type
from a tree dialog
representing the
Cable Categories and
Type structure.</p>
<p class="note ce n-cname">User can set the name for the new
cables. The # char represents
position of index value in Name
string. The Index column allows
user to set the starting (numeric)
index. This will increment by 1
after each cable is created. User
can also define the Alphabetic
Index, which is also incremented.
Depending if this value if
uppercase or lowercase, the next
(incremented) value.</p>
<p class="note ce n-cgroup">Cable groupings Pulldown displays a
grid of all defined groupings.  Each
Grouping row has a checkbox which
allows user to select multiple entries.
The Ok button on the Grouping
selection dialog  will set the
groupings for hte cable row entry</p>
<p class="note ce n-bysel">By Selecting the Save as New Cableset button allows
the current entries in the Cable Grid to be saved under
a new cable set name.  The user is prompted to enter
the name of the New Cableset and by selecting the
Save button will create the new cabelset entry.  The
user can cancel the Save operation by selecting the
Cancel button or by clicking x in top right of dialog.</p>
<p class="note n-areas1">List of available areas, after user selects an area from the list, an
area link object is placed in the current site at the endpoint of the
cable or pathway being inserted.
NOTE:  The area link object is circle icon and can be sized by the
user. After the area link object is created, the design view changes
to the selected area where the user can specify the continuation
point of the cable/pathway.  Once the continuation point is selected
another link area object is created and the user can then continue
selecting points that make up the cable or pathway route.</p>
<p class="note n-areas2">List of available areas, after user selects an area from the list, an
area link object is placed in the current site at the endpoint of the
cable or pathway being inserted.
NOTE:  The area link object is circle icon and can be sized by the
user. After the area link object is created, the design view changes
to the selected area where the user can specify the continuation
point of the cable/pathway.  Once the continuation point is selected
another link area object is created and the user can then continue
selecting points that make up the cable or pathway route.</p>
<p class="note ra n-vertex">If a cursor is near a vertex it should become enabled
through context menu (both for Cables and Pathways)</p>

<svg class="overlay" width="3576" height="2224" viewBox="0 0 3576 2224">
<!-- arrows -->
<g class="arrows">
<path d="M35 88H77"/><path d="M326 82V120"/><path d="M899 89V33"/><path d="M1019 113H1073"/><path d="M977 178V225"/><path d="M884 252H839"/><path d="M1202 439H1131"/><path d="M1339 319H1395"/><path d="M1233 331V367"/><path d="M1317 469H1350"/>
<path d="M1029 740H1077"/><path d="M1043 773H1151"/><path d="M1038 804H1154"/><path d="M1085 860H1126"/><path d="M989 944H1107"/><path d="M1185 981V1013"/><path d="M1044 1125H1165"/>
<path d="M1831 115H1890"/><path d="M1664 168V210"/><path d="M2693 70H2628"/><path d="M1674 290H1771"/><path d="M2794 124L2882 107"/><path d="M2794 145H2860"/><path d="M2819 170H2885"/><path d="M2692 215V248"/><path d="M2891 353V376"/>
<path d="M1948 785H2021"/><path d="M2231 751H2273"/><path d="M2704 1011H2753"/><path d="M2373 1045H2316"/><path d="M2803 712H2833"/><path d="M3005 742V781"/>
<path d="M2133 1219H2193"/><path d="M1664 1334V1395"/><path d="M1737 1660V1853"/><path d="M2024 1661V1838"/><path d="M2312 1510V1696"/><path d="M2698 1518V1702"/><path d="M2929 1253H2853"/><path d="M2918 1631H2829"/>
</g>
<g class="wires"><path d="M885 978H843V1075"/><path d="M2496 698V721H2573"/><path d="M1758 703V741"/><path d="M2381 1011H2552"/><path d="M1904 1292H1934"/></g>
<!-- braces -->
<use href="#br" x="979" y="861" width="15" height="60"/><use href="#br" x="2828" y="35" width="13" height="47"/><use href="#br" x="2285" y="800" width="14" height="71"/><use href="#br" x="2282" y="890" width="15" height="96"/><use href="#br" x="3110" y="561" width="15" height="139"/><use href="#br" x="3145" y="1755" width="13" height="138"/><use href="#br" x="3150" y="1983" width="15" height="152"/><use href="#bl" x="2750" y="2026" width="12" height="43"/>
<use href="#bd" x="1670" y="1543" width="124" height="14"/><use href="#bd" x="1805" y="1539" width="143" height="15"/><use href="#bd" x="1960" y="1542" width="197" height="14"/><use href="#bd" x="2256" y="1382" width="128" height="14"/><use href="#bd" x="2430" y="1381" width="207" height="14"/><use href="#bd" x="2653" y="1381" width="220" height="15"/>
<use href="#bu" x="2405" y="1209" width="395" height="15"/><use href="#bu" x="2920" y="1544" width="325" height="15"/>
<!-- pan and zoom controls -->
<g fill="#ededed" stroke="#000" stroke-width="2.500"><circle cx="978" cy="116" r="36.500"/><rect x="965" y="154" width="23" height="23" rx="4"/><circle cx="1056" cy="302" r="29"/><rect x="1043" y="333" width="27" height="38" rx="4"/></g>
<path d="M978 90l5 5h-10zM978 146l5-5h-10zM948 117l5-5v10zM1007 117l-5-5v10zM977 169l5-5h-10zM1056 279l5 5h-10zM1056 328l5-5h-10zM1031 303l5-5v10zM1080 303l-5-5v10z"/>
<circle cx="978" cy="111" r="7"/><circle cx="978" cy="125" r="7"/><circle cx="1056" cy="296" r="7"/><circle cx="1056" cy="310" r="7"/>
<path d="M974 111h8M978 107v8M974 125h8M1052 296h8M1052 310h8M1056 306v8" stroke="#fff" stroke-width="2"/>
<use href="#doc" x="1048" y="337" width="16" height="16"/><use href="#eye" x="1048" y="355" width="16" height="16"/>
<!-- toolbars -->
<use href="#line" x="1220" y="35" width="25" height="25"/><use href="#arc" x="1264" y="35" width="25" height="25"/><text class="ser" x="1309" y="52" font-size="30">A</text><ellipse cx="1363" cy="47" rx="9" ry="9" fill="none" stroke="#000" stroke-width="2.500"/><path d="M1369 57h10l-5 4z"/><use href="#image" x="1401" y="35" width="25" height="25"/>
<use href="#scissors" x="1219" y="101" width="24" height="22"/><use href="#copy" x="1251" y="99" width="24" height="25"/><use href="#x" x="1284" y="101" width="20" height="20"/><path d="M1303 117h10l-5 5z"/><use href="#props" x="1324" y="99" width="24" height="24"/><use href="#scale" x="1356" y="101" width="22" height="21"/><use href="#rotate" x="1388" y="99" width="23" height="24"/>
<use href="#list" x="1215" y="172" width="25" height="24"/><use href="#plus" x="1240" y="164" width="12" height="12"/><use href="#replace" x="1266" y="173" width="24" height="24"/>
<use href="#link" x="1221" y="245" width="24" height="24"/><use href="#plus" x="1240" y="241" width="12" height="12"/><use href="#link" x="1274" y="245" width="24" height="24"/><rect x="1292" y="243" width="8" height="8" fill="#fff" stroke="#000" stroke-width="2"/><use href="#link" x="1320" y="245" width="24" height="24"/><use href="#swap" x="1337" y="240" width="16" height="16"/><use href="#swap" x="1373" y="246" width="24" height="24"/><use href="#grid" x="1412" y="245" width="24" height="24"/>
<use href="#menu" x="1221" y="308" width="22" height="21"/><use href="#upload" x="1259" y="304" width="24" height="22"/><path d="M1284 324h10l-5 4z"/><use href="#refresh" x="1312" y="307" width="22" height="22"/>
<use href="#pin" x="1205" y="427" width="22" height="21"/><path d="M1203 467.500l6-10.500h13l6 10.500-6 10.500h-13z" fill="#fff" stroke="#000" stroke-width="2"/>
<!-- sample lines -->
<g fill="none" stroke-linecap="round" stroke-linejoin="round"><path d="M44 782L73 805 103 781H141" stroke="#000" stroke-width="4"/><g stroke="#cf2a27" stroke-width="4.500"><path d="M42 849L72 873 102 849H142M39 923L69 946 99 923H139"/><path d="M208 841Q280 848 309 881M203 915Q275 922 304 955"/></g><path d="M211 786Q284 794 310 826" stroke="#000" stroke-width="4"/></g>
<g><use href="#h" x="37" y="844" width="10" height="10"/><use href="#h" x="67" y="868" width="10" height="10"/><use href="#h" x="97" y="844" width="10" height="10"/><use href="#h" x="137" y="844" width="10" height="10"/><use href="#hr" x="34" y="918" width="10" height="10"/><use href="#h" x="64" y="941" width="10" height="10"/><use href="#h" x="94" y="918" width="10" height="10"/><use href="#h" x="134" y="918" width="10" height="10"/>
<use href="#h" x="202" y="837" width="10" height="10"/><use href="#h" x="240" y="842" width="10" height="10"/><use href="#h" x="275" y="854" width="10" height="10"/><use href="#h" x="304" y="876" width="10" height="10"/><use href="#h" x="213" y="872" width="10" height="10"/><use href="#h" x="197" y="911" width="10" height="10"/><use href="#hr" x="235" y="916" width="10" height="10"/><use href="#h" x="270" y="928" width="10" height="10"/><use href="#h" x="299" y="950" width="10" height="10"/><use href="#h" x="208" y="946" width="10" height="10"/></g>
<use href="#cursor" x="39" y="926" width="9" height="16"/><use href="#cursor" x="240" y="923" width="9" height="16"/>
<!-- pointers -->
<use href="#cursor" x="40" y="1013" width="14" height="25"/><use href="#cursor" x="95" y="1013" width="14" height="25"/><use href="#cursor" x="148" y="1013" width="14" height="25"/><use href="#cursor" x="194" y="1013" width="14" height="25"/><use href="#cursor" x="249" y="1013" width="14" height="25"/><use href="#cursor" x="302" y="1013" width="14" height="25"/>
<path d="M57 1037h12M63 1031v12M112 1037h12M171 1032v10M325 1032v10M271 1030v14M268 1029l3 2 3-2M268 1045l3-2 3 2" fill="none" stroke="#000" stroke-width="1.600"/>
<path d="M55 1037l4-3v6zM71 1037l-4-3v6zM63 1029l-3 4h6zM63 1045l-3-4h6zM110 1037l4-3v6zM126 1037l-4-3v6zM171 1029l-3 4h6zM171 1045l-3-4h6zM325 1029l-3 4h6zM325 1045l-3-4h6z"/>
<use href="#rotate" x="209" y="1030" width="15" height="14"/>
<!-- shapes -->
<g fill="#fff" stroke="#000" stroke-width="2"><path d="M651 777h44v38h-44z"/><ellipse cx="673" cy="855" rx="22" ry="19"/><path d="M673 901l22 38h-44zM673 972l22 19-22 19-22-19z"/></g>
<g fill="#fff" stroke="#cf2a27" stroke-width="2"><path d="M737 780h42v38h-42z"/><ellipse cx="758" cy="858" rx="22" ry="19"/><path d="M758 901l22 38h-44zM758 972l22 19-22 19-22-19z"/></g>
<use href="#hr" x="732" y="775" width="10" height="10"/><use href="#hr" x="773" y="775" width="10" height="10"/><use href="#hr" x="732" y="812" width="10" height="10"/><use href="#hr" x="773" y="812" width="10" height="10"/><use href="#hr" x="753" y="853" width="10" height="10"/><use href="#hr" x="753" y="915" width="10" height="10"/><use href="#hr" x="753" y="986" width="10" height="10"/>
<!-- images -->
<use href="#image" x="548" y="917" width="52" height="52"/><path d="M547 996h50v64h-50z" fill="none" stroke="#cf2a27" stroke-width="2.500"/><use href="#image" x="548" y="1003" width="50" height="50"/>
<use href="#hr" x="541" y="991" width="10" height="10"/><use href="#hr" x="592" y="991" width="10" height="10"/><use href="#hr" x="541" y="1055" width="10" height="10"/><use href="#hr" x="592" y="1055" width="10" height="10"/>
<use href="#hr" x="369" y="819" width="10" height="10"/><use href="#hr" x="593" y="819" width="10" height="10"/><use href="#hr" x="369" y="867" width="10" height="10"/><use href="#hr" x="593" y="867" width="10" height="10"/>
<path d="M389 856l197 2M466.500 839v15" stroke="#000" stroke-width="1.700"/>
<path d="M910 953h10l-5 4zM66 1288h10l-5 5z"/>
<use href="#plus" x="1671" y="134" width="13" height="13"/>
<circle cx="1958" cy="1373" r="9.500" fill="none" stroke="#000" stroke-width="2.200"/><rect x="1953" y="1368" width="10" height="10" fill="none" stroke="#000" stroke-width="1.800"/>
<path d="M2194 1266h10" stroke="#000" stroke-width="1.500"/>
</svg>
</main>
</body>
</html>
```
FILE: styles.css
```css
*{box-sizing:border-box}
body{margin:0;background:#fff;color:#000;font:13px/16px Lato,"Liberation Sans",sans-serif;letter-spacing:.016em;-webkit-text-stroke:.2px}
h1,h2,h3,p,ul,fieldset{margin:0;padding:0}
ul{list-style:none}
svg{flex:none}
.defs{position:absolute;width:0;height:0}
.board{position:relative;width:3576px;height:2224px;display:flex;overflow:hidden}
.col{display:flex;flex-direction:column;align-items:flex-start}
.left{width:1583px}
.right{margin-left:8px}
.panel{border:3px solid #000;border-top-width:4px;border-bottom-width:4px}
.canvas-area{width:1583px;height:598px}
.decorative{width:1579px;height:930px;margin-top:10px}
.equipment{width:1707px;height:1074px;margin-left:17px}
.cable{width:1984px;height:1105px;margin-top:43px}

/* free-floating items share one canvas */
h1,.viewport,.tabs,.viewctl,.toolbox,fieldset,.menu,.list,.win,.note,.rules,.link,.sticky,.overlay{position:absolute}
.overlay{left:0;top:0;pointer-events:none}
.arrows path,.wires path{fill:none;stroke:#cf2a27;stroke-width:4.500;stroke-linecap:round;stroke-linejoin:round}
.arrows path{marker-end:url(#head)}
h1{font-size:24px;line-height:30px;font-weight:700;color:#cf2a27;white-space:nowrap;-webkit-text-stroke:0}
.t1{left:10px;top:10px;letter-spacing:.008em}
.t2{left:9px;top:617px;letter-spacing:.026em}
.t3{left:1624px;top:16px;letter-spacing:.048em}
.t4{left:1612px;top:1137px;letter-spacing:.018em}
.link{font-size:20px;line-height:24px;color:#134f8c;letter-spacing:.0125em;white-space:nowrap;border-bottom:2px solid #134f8c}
.k1{left:9px;top:1496px}.k2{left:1674px;top:187px}.k3{left:2592px;top:2176px}
.k1,.k2,.k3{height:23px}

/* canvas viewport */
.viewport{left:8px;top:72px;width:1111px;height:340px;border:3px solid #000}
.viewport aside{width:31px;height:100%;background:#ccc;border-right:2px solid #000;display:flex;flex-direction:column;align-items:center}
.hide{width:6px;height:10px;margin-top:9px}
.viewport span{writing-mode:vertical-rl;transform:rotate(180deg);font-size:16px;margin-top:140px;letter-spacing:.03em}
.tabs{left:30px;top:49px;display:flex;align-items:flex-start}
.tab{position:relative;height:24px;margin-right:5px;background:#ccc;border:solid #000;border-width:3px 0 0 2px;padding-left:2px;line-height:19px;white-space:nowrap}
.tab::after{content:"";position:absolute;top:-3px;bottom:0;right:-3px;width:9px;background:inherit;border:solid #000;border-width:3px 2px 0 0;transform:skewX(13deg)}
.tab svg{position:absolute;right:3px;top:4px;width:13px;height:13px;z-index:1}
.tab.on{background:#fff;height:27px;line-height:22px}
.tab.a{width:142px}.tab.b{width:121px}.tab.c{width:127px}.tab.d{width:128px}.tab.e{width:149px}
.viewctl{left:683px;top:201px;width:149px;height:132px;border:3px solid #000;border-radius:10px;background:#ededed;padding:7px 0 0 5px;font-size:10.500px;letter-spacing:0}
.viewctl li{display:flex;align-items:center;height:16.700px;gap:3px;white-space:nowrap}
.viewctl svg{width:15px;height:15px}
.toolbox{left:1155px;top:12px;width:410px;height:576px;border:3px solid #000}

/* fieldsets */
fieldset{border:3px solid #000;border-bottom-width:4px;padding:0 0 0 6px;min-width:0}
fieldset.g{background:#f6f6f6}
legend{position:relative;top:-2px;height:16px;padding:0 5px;white-space:nowrap}
.f-ddo{left:1204px;top:19px;width:242px;height:48px}
.f-ddot{left:1204px;top:81px;width:282px;height:50px}
.f-eq{left:1204px;top:148px;width:183px;height:56px}
.f-cp{left:1204px;top:224px;width:247px;height:50px}
.f-gen{left:1204px;top:287px;width:149px;height:51px}
.f-loc{left:1186px;top:407px;width:211px;height:84px}
.f-loc div{font-size:16px;height:31px;line-height:31px;padding-left:37px;position:relative;top:-2px;white-space:nowrap}
.f-lines{left:20px;top:755px;width:141px;height:215px}
.f-arcs{left:185px;top:755px;width:141px;height:232px}
.f-text{left:350px;top:760px;width:272px;height:134px;font-size:16px}
.f-text legend{font-size:13px}
.f-text p{margin:3px 0 0 79px;line-height:20px}
.sel{width:226px;height:51px;margin:23px 0 0 14px;background:#ddd;border:3px dashed #cf2a27;padding:11px 0 0 12px;line-height:24px;letter-spacing:0}
.f-shapes{left:637px;top:757px;width:158px;height:271px}
.f-images{left:521px;top:900px;width:101px;height:183px}
.f-pointers{left:20px;top:995px;width:330px;height:68px}
.f-tools{left:853px;top:625px;width:644px;height:451px}
.f-dtools{left:864px;top:835px;width:219px;height:235px}
.f-ctx{left:28px;top:1094px;width:604px;height:276px}
.f-def{left:649px;top:1166px;width:418px;height:323px}
.f-eqt{left:1634px;top:82px;width:239px;height:97px}
.f-eqctx{left:2645px;top:9px;width:656px;height:406px}
.f-cpt{left:1930px;top:1181px;width:243px;height:170px}
.f-cctx{left:2745px;top:1702px;width:415px;height:235px}
.f-pctx{left:2745px;top:1954px;width:423px;height:211px}

/* tool lists */
.list,.f-dtools ul,.f-eqt ul{font-size:16px;letter-spacing:.022em}
.list{border:3px solid #000;border-bottom-width:4px;background:#fff}
.list li,.f-dtools li,.f-eqt li,.f-cpt li{display:flex;align-items:center;white-space:nowrap}
.l-add{left:898px;top:655px;width:166px;height:175px;display:grid;grid-template-rows:30px 29px 29px 33px 32px;padding:7px 0 0 17px}
.list svg,.list .A{width:26px;height:24px;margin-right:10px}
.A{font:700 17px/16px "Liberation Serif",serif;text-align:center;flex:none}
.ser{font-family:"Liberation Serif",serif;font-weight:700}
.list .A{font-size:30px;line-height:24px}
.f-dtools ul{padding:3px 0 0 18px}
.f-dtools li{height:35.200px}
.f-dtools svg{width:25px;height:24px;margin-right:9px}
.f-dtools li:nth-child(3) svg{padding:2px}
.f-eqt ul{padding:4px 0 0 7px}
.f-eqt li{height:38px}
.f-eqt svg{width:24px;height:21px;margin-right:7px}
.f-cpt ul{padding:6px 0 0 3px}
.f-cpt li{height:33px}
.f-cpt svg{width:30px;height:26px;margin-right:1px}
.f-cpt li:nth-child(n+3) svg{width:25px;height:22px;margin-right:6px}
.f-cpt li:nth-child(4) svg{width:22px;height:19px;margin:0 10px 0 2px}

/* menus */
.menu{background:#fff;border:3px solid #000;border-bottom-width:4px}
.menu li{display:flex;align-items:center;height:21.100px;padding-left:5px;margin:0 2px 0 1px;white-space:nowrap;position:relative}
.menu li>svg,.menu li>.A{width:16px;height:16px;margin-right:5px}
.menu li.sep{height:5px;margin:0 4px;background:linear-gradient(#000,#000) 0 2px/100% 2px no-repeat}
.menu li .ch{position:absolute;right:0;top:4px;width:9px;height:13px;margin:0}
.menu li .lg{width:18px;height:18px}
.menu .on,.tree .on{background:#94baf2}
.menu .dots{font-size:12px;padding-left:15px}
.plain li{padding-left:14px}
.big{font-size:15px}
.menu.big li{height:23px;padding-left:6px}
.menu.big li.sep{height:5px}
.menu.big li>svg{width:19px;height:18px}
.menu.big .ch{width:9px;height:13px}
.menu.big .dots{padding-left:16px}
.menu.wide li>svg{margin-right:14px}
.menu.wide li>.as{width:30px;height:20px;margin-right:0}
.menu.wide .ch{margin:0}
.m-import{left:1282px;top:329px;width:150px;height:73px}
.m-import svg{padding:1px}
.m-rm{left:1108px;top:930px;width:161px;height:57px}
.m-campus1{left:1268px;top:893px;width:216px;height:94px}
.m-ctx{left:41px;top:1113px;width:198px;height:241px;padding-top:1px}
.menu.m-ctx li>svg{width:17px;margin-right:7px}
.menu.m-ctx li>.ch{width:9px;margin:0}
.m-layers{left:238px;top:1265px;width:143px;height:94px}
.m-ctx2{left:238px;top:1163px;width:203px;height:54px}
.m-ctx3{left:440px;top:1188px;width:176px;height:102px;padding-top:1px}
.m-def1{left:664px;top:1367px;width:149px;height:108px}
.m-def2{left:812px;top:1264px;width:149px;height:135px}
.m-def3{left:960px;top:1181px;width:93px;height:115px}
.m-eq1{left:2676px;top:32px;width:150px;height:182px}
.m-eq1 li{padding-left:2px}
.m-eq1 .ni{padding-left:20px}
.menu.m-eq1 li>svg{margin-right:4px}
.menu.m-eq1 li>.lg{margin-right:0}
.menu.m-eq1 li>.ch{margin-right:0}
.menu .sm{padding:2px}
.m-eq2{left:2824px;top:186px;width:152px;height:165px}
.m-eq3{left:2976px;top:257px;width:215px;height:94px}
.m-c1{left:2759px;top:1722px;width:196px;height:204px}
.m-c2{left:2954px;top:1779px;width:184px;height:94px}
.m-p1{left:2759px;top:1973px;width:199px;height:178px;letter-spacing:.005em}
.m-p2{left:2958px;top:2006px;width:185px;height:94px}

/* windows */
.win{display:flex;flex-direction:column;background:#fff;border:3px solid #000;border-bottom-width:4px}
.win header{flex:none;height:22px;border-bottom:3px solid #000;padding-left:3px;line-height:19px;display:flex;justify-content:space-between;align-items:center;white-space:nowrap}
.win header svg{width:42px;height:16px;margin-right:4px}
.win .body{flex:1;min-height:0}
.win footer{flex:none;height:22px;border-top:3px solid #000;display:flex;position:relative;padding-right:22px}
footer{justify-content:flex-end}
footer>svg{position:absolute;right:2px;top:4px;width:14px;height:12px}
button{font:inherit;letter-spacing:inherit;color:#000;padding:0;margin:-3px 0 0;height:24px;background:#ddd;border:solid #000;border-width:2px 5px 4px 2px;display:flex;align-items:center;justify-content:center;white-space:nowrap}
button svg{width:15px;height:15px;margin-right:4px}
button.glow{border-color:#94baf2;border-width:3px 5px 5px 3px}
.field,.combo{background:#fff;border:3px solid #000;border-bottom-width:4px;display:inline-flex;align-items:center;padding-left:4px;font-size:13px}
.combo{height:21px;border-bottom-width:3px;justify-content:space-between}
.combo i{border-left:2px solid #000;align-self:stretch;width:16px;display:flex;align-items:center;justify-content:center}
.combo i svg{width:9px;height:12px}
table{border-collapse:collapse;table-layout:fixed}
.rows{width:100%;border:3px solid #000;white-space:nowrap}
.rows th{font-weight:400;background:#ccc;height:16px;text-align:left}
.rows th,.rows td{padding:0 0 0 3px;border-right:2px solid #000;line-height:15px;overflow:hidden}
.rows td{height:24px}
.rows tr:nth-child(even) td{background:#ededed}
.rows tr.on td{background:#94baf2}
.rows tr.last td{height:8px;background:#fff}
.rows .ce{text-align:center;padding:0}

.w-props{left:1171px;top:1087px;width:394px;height:414px}
.w-props table{width:334px;margin:10px 0 0 20px;border:3px solid #000;font-size:11px;letter-spacing:.01em}
.w-props tr{height:28px}
.w-props th{font-weight:400;background:#ccc;line-height:13px;font-size:12px;text-align:left;padding:0 3px}
.w-props th:first-child{text-align:center;font-size:11px}
.w-props td,.w-props th{border-right:2px solid #000;border-bottom:2px solid #000}
.w-props td{padding:0 3px;line-height:14px;height:28px}
.w-props td:first-child{text-align:center}
.w-props td svg{width:11px;height:13px;vertical-align:middle}
.w-props tr:nth-child(even) td{background:#ededed}
.c1{width:106px}.c2{width:127px}
.w-props .combo{font-size:10px;height:21px;vertical-align:middle;margin-left:1px}
.w-props .combo i svg{width:9px;height:11px}
.w59{width:59px}.w66{width:66px}.w69{width:69px}.w74{width:74px}.w80{width:80px}.w88{width:88px}
.dash{width:56px;border-bottom:1px solid #000;margin-top:5px}
.w-props .combo .hatch{width:14px;height:12px;margin-left:12px}
.swatch{display:inline-block;position:relative;width:24px;height:22px;border:2px solid #000;border-radius:2px;vertical-align:middle;margin-left:2px;background:#fff}
.swatch.blue{background:#2a78e4}
.swatch::after{content:"";position:absolute;right:-1px;bottom:-5px;border:5px solid transparent;border-top:6px solid #000;border-bottom:0}
.w-props footer button:first-child{width:50px}
.w-props footer button+button{width:63px;margin-left:9px}

.w-place{left:1628px;top:224px;width:1010px;height:475px}
.w-place .body{display:flex;padding:8px 0 0 13px}
.pane{width:268px}
.inst{width:696px;margin-left:14px}
h2{font:inherit;font-weight:400;line-height:16px;padding-bottom:3px}
.inst h2{padding:1px 0 1px 1px}
.tree{border:3px solid #000;border-bottom-width:4px;height:388px;padding-top:4px}
.tree li{position:relative;display:flex;align-items:center;height:21.050px;padding-left:10px;white-space:nowrap}
.tree svg{width:16px;height:16px;margin-right:7px}
.tree .dn{width:10px;height:7px;margin-right:8px}
.tree .add svg{width:15px;height:15px}
.tree .add{height:21px;padding-left:8px}
.tree .l2{padding-left:32px}
.tree .l2 .dn{margin-right:10px}
.tree .l3{padding-left:53px}
.tree .minus{position:absolute;left:198px;top:5px;width:15px;height:15px}
.p1{width:139px}.p2{width:103px}.p3{width:234px}.p4{width:118px}
.w-place footer{padding-right:48px}
.w-place .first{margin-right:auto;margin-left:19px;width:152px}
.w-place footer button:nth-child(2){width:51px;margin-right:8px}
.w-place footer button:nth-child(3){width:61px}

.form{display:grid;grid-template-columns:152px auto;justify-content:start;column-gap:5px}
.form label{text-align:right;white-space:nowrap}
.w-new{left:2032px;top:703px;width:510px;height:359px}
.w-new .form{grid-template-rows:38px 110px 38px 34px 44px 30px;padding-top:13px;column-gap:7px}
.w-new .field{width:87px;height:27px}
.w-new .field.q{width:38px}
.stage .combo{width:88px}
.stage ul{border:3px solid #000;width:88px;padding:3px 0 0 4px;height:72px;margin-top:-2px}
.w-new label{padding-top:2px}
.stage{margin-top:-1px}
.w-new u{padding-top:2px}
.w-new footer{padding-right:15px}
.w-new .glow{width:58px;margin-right:12px}
.w-new .glow+button{width:73px}

.w-design{left:2841px;top:481px;width:435px;height:260px}
.radios{display:flex;align-items:center;white-space:nowrap;border-bottom:2px solid #000}
.radios svg{width:14px;height:14px}
.w-design .radios{height:44px;padding-left:5px}
.w-design .r1{margin-left:11px;margin-right:1px}
.w-design .r2{margin:0 1px 0 17px}
.w-design .form{grid-template-columns:171px auto;column-gap:7px;grid-template-rows:37px 37px 38px 38px;padding-top:11px}
.w-design .field{width:75px;height:27px}
.w-design .field.s{width:52px;margin-right:3px}
.w-design label{padding-top:5px}
.w-design footer{padding-right:125px}
.w-design .glow{width:140px;margin-right:19px}
.w-design .glow svg{width:17px;height:15px;margin-right:6px}
.w-design .glow+button{width:62px}

.w-group{width:192px;height:269px}
.g1{left:2758px;top:792px}.g2{left:1928px;top:1842px}.g3{left:2539px;top:1707px}
.w-group .body{padding:4px 0 0 13px;display:flex}
.w-group ul{width:161px;height:214px;border:3px solid #000;border-right-width:4px;border-bottom-width:4px;overflow:hidden;background:linear-gradient(#000,#000) 18px 0/2px 100% no-repeat}
.w-group li{height:30px;display:flex;align-items:center;padding-left:4px;width:141px}
.w-group li svg{width:12px;height:14px;margin-right:6px}
.w-group li:nth-child(even){background:linear-gradient(#000,#000) 18px 0/2px 100% no-repeat #ededed}
.w-group li.hd{height:16px;width:auto;background:linear-gradient(#000,#000) 18px 0/2px 100% no-repeat #ccc}
.scroll{width:14px;height:190px;border:2px solid #000;margin:20px 0 0 -17px;background:linear-gradient(#000,#000) 2px 15px/7px 22px no-repeat,linear-gradient(#000,#000) 0 11px/100% 2px no-repeat,linear-gradient(#000,#000) 0 calc(100% - 11px)/100% 2px no-repeat #fff;position:relative}
.scroll::before,.scroll::after{content:"";position:absolute;left:1px;border:4px solid transparent}
.scroll::before{top:-2px;border-bottom:8px solid #000}
.scroll::after{bottom:-2px;border-top:8px solid #000}
.w-group footer{justify-content:center;padding-right:10px}
.w-group footer button{width:61px}

.w-path{left:1615px;top:1401px;width:577px;height:421px}
h3{font-size:15px;font-weight:400;line-height:18px;letter-spacing:.02em}
.w-path .body{padding:8px 21px 0 18px}
.w-path h3{margin-left:-12px;padding-bottom:7px}
.tall td{height:30px;position:relative}
.tall svg{width:12px;height:14px;vertical-align:middle}
.tall .dn{position:absolute;right:4px;bottom:5px;width:10px;height:8px}
.tall .dn.m{right:17px;bottom:11px}
.k{width:21px}.a1{width:142px}.a2{width:33px}.a3{width:75px}.a4{width:44px}
.tall tr.last td{height:6px}
.w-path footer{padding-right:24px;height:23px}
.w-path footer button{width:177px}
.w-path footer button+button{width:74px;margin-left:17px}
.w-path footer button svg{width:17px;height:17px}

.w-cable{left:2199px;top:1203px;width:693px;height:475px}
.w-cable .radios{height:40px;padding-left:8px}
.w-cable .r1{margin-right:0}
.w-cable .r2{margin-left:28px}
.w-cable .combo{width:197px;height:23px;position:absolute;left:392px}
.w-cable .combo i{width:18px}
.w-cable .sv{position:absolute;left:600px;width:22px;height:22px;margin-top:6px}
.w-cable .tr{position:absolute;left:628px;width:21px;height:22px;margin-top:6px}
.w-cable .body{padding:7px 15px 0 22px}
.w-cable h3{margin-left:-13px;padding-bottom:8px}
.b1{width:140px}.b2{width:34px}.b3{width:73px}.b4{width:47px}.b5{width:118px}
.savenew{width:100%;height:26px;margin:-1px 0 0;border-width:3px 4px 5px 2px}
.w-cable footer{padding-right:12px;height:22px}
.w-cable footer button{width:171px;margin-right:167px}
.w-cable footer button+button{width:73px;margin-right:0}

.w-csname{left:2919px;top:1567px;width:331px;height:110px}
.w-csname .body{padding:16px 18px}
.w-csname .field{width:290px;height:25px}
.w-csname footer{padding-right:21px}
.w-csname footer button{width:51px}
.w-csname footer button+button{width:61px;margin-left:10px}

.w-ptype{left:1650px;top:1858px;width:229px;height:211px}
.w-ptype .body{padding:15px 0 0 15px}
.w-ptype ul{width:192px;height:132px;border:3px solid #000;border-right-width:4px;border-bottom-width:4px}
.w-ptype li{height:21px;line-height:20px;padding-left:7px}
.w-ptype .hd{height:18px;line-height:17px;background:#ccc}
.w-ptype li:nth-child(even){background:#ededed}
.w-ptype li.on{background:#94baf2}
.w-ptype footer{justify-content:center;padding-right:0}
.w-ptype footer button{width:81px}

.w-ctype{left:2224px;top:1707px;width:229px;height:285px}
.w-ctype .body{display:flex;padding:15px 0 0 9px}
.w-ctype .tree{width:207px;height:218px;padding-top:1px;border-right-width:4px}
.w-ctype .tree li{padding-left:7px;margin-right:14px}
.w-ctype .tree li.add{padding-left:4px}
.w-ctype .dn{margin-bottom:8px}
.w-ctype .tree li.l2{padding-left:35px}
.w-ctype .tree .l2 .dn{margin-right:6px}
.w-ctype .tree li.l3{padding-left:57px}
.w-ctype .tree .l3 svg{width:15px;height:15px;margin-right:5px;margin-bottom:6px}
.w-ctype .scroll{height:213px;margin:3px 0 0 -17px}
.w-ctype footer{justify-content:center;padding-right:12px}
.w-ctype footer button{width:68px}

/* sticky note */
.sticky{left:1635px;top:881px;width:356px;height:120px;padding:31px 0 0 11px;white-space:pre;line-height:15.800px;background:linear-gradient(115deg,#fff066 20%,#ffe14f 75%);clip-path:polygon(0 -20px,101% -20px,100% 100%,60% 99%,0 97%)}
.sticky i{position:absolute;left:134px;top:-12px;width:88px;height:25px;background:#dc3832;transform:rotate(-3deg)}

/* annotation text */
.note{color:#c9302c;white-space:pre;line-height:15.700px}
.note a{color:#134f8c;text-decoration:underline;text-underline-offset:3px}
.note.lg{font-size:15px;line-height:18px;letter-spacing:.02em}
.note.bold{font-weight:700;letter-spacing:.035em;-webkit-text-stroke:0}
.ra{text-align:right}
.ce{text-align:center}
.note.ce{transform:translateX(-50%)}
.rules{left:56px;top:664px;color:#c9302c;white-space:nowrap}
.rules li{height:15.800px}
.rules li::before{content:"·";position:absolute;left:-17px;font-weight:700}
.n-inherit li{margin-left:37px}
.n-inherit li::before{content:"·";position:absolute;left:20px;font-weight:700}
.n-hide{left:80px;top:80px}
.n-tab{left:243px;top:118px}
.n-canvas{left:829px;top:15px}
.n-pan{left:1075px;top:105px}
.n-expands{left:890px;top:224px}
.n-tag{right:2451px;top:417px}
.n-reload{left:1399px;top:312px}
.n-layer{left:1178px;top:368px}
.n-space{left:1353px;top:422px}
.n-see{left:1083px;top:725px}
.n-block{left:1155px;top:766px}
.n-imglib{left:1159px;top:796px}
.n-all{left:1130px;top:839px}
.n-cut{left:999px;top:874px}
.n-after{left:1273px;top:1012px}
.n-inherit{left:637px;top:1078px}
.n-repl{left:1891px;top:98px}
.n-sub{right:955px;top:34px}
.n-compat{left:2846px;top:42px}
.n-dialog{left:2885px;top:97px}
.note.n-irmn{left:2862px;top:127px;letter-spacing:.018em}
.n-creates{left:2889px;top:162px}
.n-popout{left:2654px;top:250px}
.n-newtab{left:3002px;top:374px}
.n-spared{right:1633px;top:742px}
.n-warn{left:2281px;top:728px}
.n-deflife{left:2304px;top:803px}
.n-same{left:2302px;top:929px}
.n-hot{left:2555px;top:998px}
.n-setting{right:1263px;top:1030px}
.n-more{left:2574px;top:700px}
.n-defval{left:3129px;top:598px;color:#c80f0f}
.n-draws{left:3072px;top:781px}
.n-pcreate{left:1753px;top:1236px}
.n-ptype{left:1731px;top:1561px}
.n-pname{left:1876px;top:1557px}
.n-pgroup{left:2058px;top:1560px}
.n-radio{left:2601px;top:1142px}
.n-saveicon{left:2933px;top:1188px}
.n-ctype{left:2319px;top:1399px}
.n-cname{left:2532px;top:1398px}
.n-cgroup{left:2763px;top:1399px}
.n-bysel{left:3081px;top:1430px}
.n-areas1{left:3163px;top:1753px}
.n-areas2{left:3169px;top:1988px}
.n-vertex{right:832px;top:2030px}
```
